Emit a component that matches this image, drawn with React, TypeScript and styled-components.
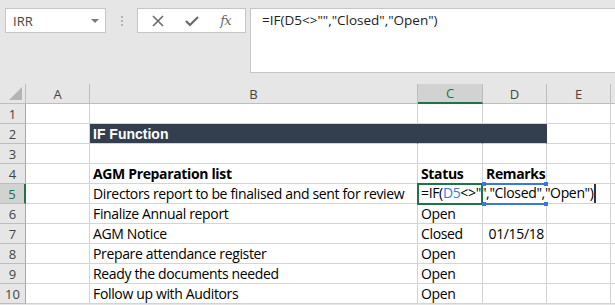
import styled, { createGlobalStyle, css } from "styled-components";

const GlobalStyle = createGlobalStyle`
  body {
    margin: 0;
    background: #e6e6e6;
    overflow: hidden;
  }
`;

const Sheet = styled.div`
  width: 615px;
  height: 305px;
  overflow: hidden;
  background: #e6e6e6;
  font-family: "Open Sans", "Noto Sans", sans-serif;
`;

const Toolbar = styled.div`
  display: flex;
  align-items: flex-start;
  height: 84px;
  padding: 8px 0 0 5px;
  box-sizing: border-box;
`;

const NameBox = styled.div`
  display: flex;
  align-items: center;
  justify-content: space-between;
  width: 101px;
  height: 25px;
  box-sizing: border-box;
  padding: 0 6px 0 7px;
  background: #fff;
  border: 1px solid #c6c6c6;
  font-size: 13px;
  color: #444;
`;

const Caret = styled.span`
  width: 0;
  height: 0;
  border-left: 4px solid transparent;
  border-right: 4px solid transparent;
  border-top: 4px solid #7a7a7a;
`;

const Grip = styled.div`
  display: flex;
  flex-direction: column;
  align-items: center;
  gap: 2px;
  width: 31px;
  padding-top: 8px;
  span {
    width: 2px;
    height: 2px;
    background: #b4b4b4;
  }
`;

const ButtonBox = styled.div`
  display: flex;
  align-items: center;
  justify-content: space-around;
  width: 109px;
  height: 25px;
  box-sizing: border-box;
  padding: 0 4px;
  background: #fff;
  border: 1px solid #c6c6c6;
  margin-right: 4px;
`;

const Fx = styled.span`
  font-family: "DejaVu Serif", "Liberation Serif", serif;
  font-style: italic;
  font-size: 13px;
  color: #6a6a6a;
  letter-spacing: -1px;
`;

const FormulaBar = styled.div`
  flex: 1;
  height: 65px;
  box-sizing: border-box;
  background: #fff;
  border: 1px solid #c6c6c6;
  border-right: none;
  padding: 2px 0 0 11px;
  font-size: 13.5px;
  color: #222;
`;

const Grid = styled.div`
  display: grid;
  grid-template-columns: 26px 64px 328px 65px 64px 64px 1fr;
  grid-auto-rows: 20px;
  background: #fff;
`;

const HeadCell = styled.div<{ $active?: boolean; $row?: boolean }>`
  display: flex;
  align-items: center;
  justify-content: center;
  box-sizing: border-box;
  background: #e6e6e6;
  border-right: 1px solid #bdbdbd;
  border-bottom: 1px solid #bdbdbd;
  font-family: "Open Sans", sans-serif;
  font-size: 13px;
  color: #444;
  ${(p) => p.$row && css`border-right-color: #a8a8a8;`}
  ${(p) =>
    p.$active &&
    css`
      background: #d2d2d2;
      color: #217346;
    `}
  ${(p) => p.$active && !p.$row && css`border-bottom: 2px solid #217346;`}
  ${(p) => p.$active && p.$row && css`border-right: 2px solid #217346;`}
`;

const Corner = styled(HeadCell)`
  position: relative;
  &::after {
    content: "";
    position: absolute;
    right: 3px;
    bottom: 3px;
    border-left: 13px solid transparent;
    border-bottom: 13px solid #b4b4b4;
  }
`;

const Cell = styled.div<{ $bold?: boolean; $band?: boolean; $right?: boolean }>`
  display: flex;
  align-items: flex-end;
  box-sizing: border-box;
  padding: 0 2px 0 3px;
  border-right: 1px solid #d4d4d4;
  border-bottom: 1px solid #d4d4d4;
  font-family: "Open Sans", sans-serif;
  font-size: 14px;
  letter-spacing: -0.35px;
  line-height: 18px;
  color: #000;
  white-space: nowrap;
  overflow: visible;
  font-weight: ${(p) => (p.$bold ? 700 : 400)};
  ${(p) => p.$right && css`justify-content: flex-end;`}
  ${(p) =>
    p.$band &&
    css`
      background: #333f4f;
      border-right-color: #333f4f;
      color: #fff;
      font-family: "Liberation Sans", Arial, sans-serif;
      font-size: 14px;
      letter-spacing: 0;
    `}
`;

const EditCell = styled.div`
  position: relative;
  grid-column: span 3;
  display: flex;
  align-items: flex-end;
  box-sizing: border-box;
  border-bottom: 1px solid #d4d4d4;
  border-right: 1px solid #d4d4d4;
`;

const Selection = styled.div`
  position: absolute;
  z-index: 2;
  left: -1px;
  top: -1px;
  width: 66px;
  height: 22px;
  box-sizing: border-box;
  border: 2px solid #217346;
`;

const RefBox = styled.div`
  position: absolute;
  z-index: 2;
  left: 67px;
  top: -1px;
  width: 61px;
  height: 22px;
  box-sizing: border-box;
  border-top: 2px solid #3c78d8;
  border-bottom: 2px solid #3c78d8;
`;

const Handle = styled.span<{ $x: number; $y: number }>`
  position: absolute;
  z-index: 3;
  width: 4px;
  height: 4px;
  background: #3c78d8;
  left: ${(p) => p.$x}px;
  top: ${(p) => p.$y}px;
`;

const EditText = styled.span`
  position: relative;
  z-index: 1;
  padding: 0 0 1px 3px;
  font-family: "Open Sans", sans-serif;
  font-size: 14px;
  letter-spacing: -0.35px;
  line-height: 18px;
  white-space: nowrap;
  background: #fff;
  border-right: 2px solid #333;
`;

const Ref = styled.span`
  color: #3c78d8;
`;

const XIcon = () => (
  <svg width="12" height="12" viewBox="0 0 12 12">
    <path d="M1 1 L11 11 M11 1 L1 11" stroke="#6a6a6a" strokeWidth="1.6" />
  </svg>
);

const CheckIcon = () => (
  <svg width="14" height="12" viewBox="0 0 14 12">
    <path d="M1 6 L5 10 L13 2" stroke="#6a6a6a" strokeWidth="2.2" fill="none" />
  </svg>
);

const rows: { n: number; b?: string; c?: string; d?: string; bold?: boolean; band?: boolean }[] = [
  { n: 1 },
  { n: 2, b: "IF Function", band: true, bold: true },
  { n: 3 },
  { n: 4, b: "AGM Preparation list", c: "Status", d: "Remarks", bold: true },
  { n: 5, b: "Directors report to be finalised and sent for review" },
  { n: 6, b: "Finalize Annual report", c: "Open" },
  { n: 7, b: "AGM Notice", c: "Closed", d: "01/15/18" },
  { n: 8, b: "Prepare attendance register", c: "Open" },
  { n: 9, b: "Ready the documents needed", c: "Open" },
  { n: 10, b: "Follow up with Auditors", c: "Open" },
];

const cols = ["A", "B", "C", "D", "E", ""];

export default function App() {
  return (
    <Sheet>
      <GlobalStyle />
      <Toolbar>
        <NameBox>
          IRR
          <Caret />
        </NameBox>
        <Grip>
          <span />
          <span />
          <span />
        </Grip>
        <ButtonBox>
          <XIcon />
          <CheckIcon />
          <Fx>fx</Fx>
        </ButtonBox>
        <FormulaBar>=IF(D5&lt;&gt;"","Closed","Open")</FormulaBar>
      </Toolbar>
      <Grid>
        <Corner />
        {cols.map((c) => (
          <HeadCell key={c || "f"} $active={c === "C"}>
            {c}
          </HeadCell>
        ))}
        {rows.map((r) => (
          <>
            <HeadCell key={`h${r.n}`} $row $active={r.n === 5}>
              {r.n}
            </HeadCell>
            <Cell key={`a${r.n}`} />
            <Cell key={`b${r.n}`} $bold={r.bold} $band={r.band}>
              {r.b}
            </Cell>
            {r.n === 5 ? (
              <EditCell key="edit">
                <Selection />
                <RefBox />
                <Handle $x={64} $y={-2} />
                <Handle $x={126} $y={-2} />
                <Handle $x={64} $y={18} />
                <Handle $x={126} $y={18} />
                <EditText>
                  =IF(<Ref>D5</Ref>&lt;&gt;"","Closed","Open")
                </EditText>
              </EditCell>
            ) : (
              <>
                <Cell key={`c${r.n}`} $bold={r.bold} $band={r.band}>
                  {r.c}
                </Cell>
                <Cell key={`d${r.n}`} $bold={r.bold} $band={r.band} $right={!!r.d && !r.bold}>
                  {r.d}
                </Cell>
                <Cell key={`e${r.n}`} />
              </>
            )}
            <Cell key={`f${r.n}`} />
          </>
        ))}
      </Grid>
    </Sheet>
  );
}
